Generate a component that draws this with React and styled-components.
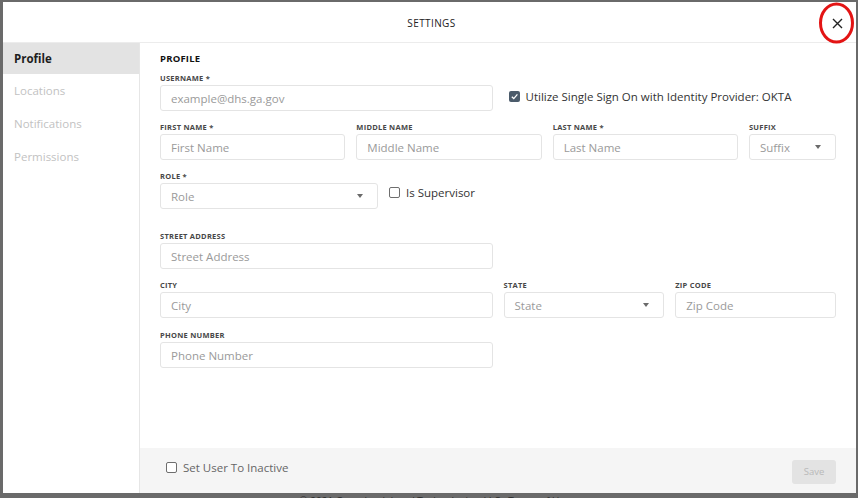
import React from 'react';
import styled, { createGlobalStyle } from 'styled-components';

const GlobalStyle = createGlobalStyle`
  html, body { margin: 0; padding: 0; background: #ffffff; }
  * { box-sizing: border-box; }
  body { font-family: 'Open Sans', 'Liberation Sans', sans-serif; }
`;

const Screen = styled.div`
  width: 864px;
  height: 498px;
  overflow: hidden;
  background: #ffffff;
`;

const Backdrop = styled.div`
  width: 858px;
  height: 498px;
  background: #6a6a6a;
  padding: 2px 2px 0 3px;
  display: flex;
  flex-direction: column;
  overflow: hidden;
`;

const Modal = styled.div`
  height: 491px;
  flex-shrink: 0;
  background: #ffffff;
  display: flex;
  flex-direction: column;
`;

const Footnote = styled.div`
  text-align: center;
  font-size: 10px;
  line-height: 12px;
  color: #2a2a2a;
  margin-top: 2px;
  padding-left: 10px;
`;

const Header = styled.div`
  position: relative;
  height: 41px;
  flex-shrink: 0;
  border-bottom: 1px solid #ececec;
  display: flex;
  align-items: center;
  justify-content: center;
`;

const Title = styled.div`
  font-size: 10px;
  letter-spacing: 0.4px;
  color: #222;
  padding-left: 4px;
  margin-top: 2px;
`;

const CloseWrap = styled.div`
  position: absolute;
  right: 0;
  top: 0;
  width: 38px;
  height: 42px;
`;

const Body = styled.div`
  flex: 1;
  display: flex;
  min-height: 0;
`;

const Sidebar = styled.nav`
  width: 137px;
  flex-shrink: 0;
  border-right: 1px solid #e6e6e6;
  display: flex;
  flex-direction: column;
`;

const NavItem = styled.div`
  height: ${p => (p.$active ? '31px' : '33px')};
  display: flex;
  align-items: center;
  padding-left: 11px;
  font-size: 11.5px;
  font-weight: ${p => (p.$active ? 700 : 400)};
  color: ${p => (p.$active ? '#1e1e1e' : '#c2c2c2')};
  background: ${p => (p.$active ? '#e3e3e3' : 'transparent')};
`;

const Main = styled.div`
  flex: 1;
  display: flex;
  flex-direction: column;
`;

const Form = styled.div`
  flex: 1;
  padding: 9px 20px 0 20px;
  display: flex;
  flex-direction: column;
`;

const SectionTitle = styled.div`
  font-size: 9.5px;
  font-weight: 700;
  color: #111;
  letter-spacing: 0.2px;
  margin-bottom: 9px;
`;

const Row = styled.div`
  display: grid;
  grid-template-columns: ${p => p.$cols};
  column-gap: 11px;
  align-items: start;
  margin-top: ${p => p.$gap || '12px'};
`;

const Field = styled.div`
  display: flex;
  flex-direction: column;
  min-width: 0;
  grid-column: span ${p => p.$span || 1};
`;

const Label = styled.div`
  font-size: 7.5px;
  font-weight: 700;
  color: #474747;
  letter-spacing: 0.25px;
  height: 8px;
  line-height: 8px;
  margin-bottom: 3px;
  text-transform: uppercase;
`;

const Input = styled.div`
  height: 26px;
  border: 1px solid #e4e4e4;
  border-radius: 3px;
  display: flex;
  align-items: center;
  justify-content: space-between;
  padding: 0 14px 0 10px;
  font-size: 11.5px;
  color: #9a9a9a;
  background: #fff;
`;

const Caret = styled.span`
  width: 0;
  height: 0;
  border-left: 3.5px solid transparent;
  border-right: 3.5px solid transparent;
  border-top: 4px solid #6a6a6a;
`;

const CheckRow = styled.label`
  display: flex;
  align-items: center;
  gap: 6px;
  font-size: 11.5px;
  white-space: nowrap;
  color: ${p => (p.$muted ? '#666' : '#333')};
  margin-top: ${p => p.$top || '0'};
  margin-bottom: ${p => p.$bottom || '0'};
  padding-left: ${p => p.$indent || '0'};
`;

const Box = styled.span`
  width: 11px;
  height: 11px;
  border-radius: 2px;
  flex-shrink: 0;
  display: flex;
  align-items: center;
  justify-content: center;
  background: ${p => (p.$checked ? '#4b5b6b' : '#fff')};
  border: ${p => (p.$checked ? 'none' : '1.3px solid #6e6e6e')};
`;

const Footer = styled.div`
  height: 45px;
  flex-shrink: 0;
  background: #f5f5f5;
  display: flex;
  align-items: center;
  justify-content: space-between;
  padding: 0 20px 0 26px;
`;

const SaveButton = styled.button`
  width: 44px;
  height: 24px;
  border: none;
  border-radius: 3px;
  background: #e3e3e3;
  color: #b9b9b9;
  font-family: inherit;
  font-size: 9.5px;
  margin-top: 2px;
`;

function Checkbox({ checked }) {
  return (
    <Box $checked={checked}>
      {checked && (
        <svg width="9" height="9" viewBox="0 0 10 10">
          <path d="M2 5.2 L4.2 7.3 L8.2 2.6" fill="none" stroke="#fff" strokeWidth="1.4" />
        </svg>
      )}
    </Box>
  );
}

function TextBox({ label, placeholder, span, select }) {
  return (
    <Field $span={span}>
      <Label>{label}</Label>
      <Input>
        <span>{placeholder}</span>
        {select && <Caret />}
      </Input>
    </Field>
  );
}

const FOUR = 'repeat(4, minmax(0, 1fr))';

export default function App() {
  return (
    <Screen>
      <GlobalStyle />
      <Backdrop>
        <Modal>
          <Header>
            <Title>SETTINGS</Title>
            <CloseWrap>
              <svg width="38" height="42" viewBox="0 0 38 42">
                <path d="M15 17 L24 26 M24 17 L15 26" stroke="#222" strokeWidth="1.4" fill="none" />
                <ellipse cx="18.5" cy="21" rx="16" ry="19" stroke="#e31414" strokeWidth="3" fill="none" />
              </svg>
            </CloseWrap>
          </Header>
          <Body>
            <Sidebar>
              <NavItem $active>Profile</NavItem>
              <NavItem>Locations</NavItem>
              <NavItem>Notifications</NavItem>
              <NavItem>Permissions</NavItem>
            </Sidebar>
            <Main>
              <Form>
                <SectionTitle>PROFILE</SectionTitle>
                <Row $cols={FOUR} $gap="0">
                  <TextBox label="Username *" placeholder="example@dhs.ga.gov" span={2} />
                  <CheckRow $top="15px" $indent="5px">
                    <Checkbox checked />
                    <span>Utilize Single Sign On with Identity Provider: OKTA</span>
                  </CheckRow>
                </Row>
                <Row $cols="repeat(3, minmax(0, 1fr)) 87px">
                  <TextBox label="First Name *" placeholder="First Name" />
                  <TextBox label="Middle Name" placeholder="Middle Name" />
                  <TextBox label="Last Name *" placeholder="Last Name" />
                  <TextBox label="Suffix" placeholder="Suffix" select />
                </Row>
                <Row $cols="repeat(3, minmax(0, 1fr))">
                  <TextBox label="Role *" placeholder="Role" select />
                  <CheckRow $top="13px">
                    <Checkbox />
                    <span>Is Supervisor</span>
                  </CheckRow>
                </Row>
                <Row $cols={FOUR} $gap="23px">
                  <TextBox label="Street Address" placeholder="Street Address" span={2} />
                </Row>
                <Row $cols={FOUR}>
                  <TextBox label="City" placeholder="City" span={2} />
                  <TextBox label="State" placeholder="State" select />
                  <TextBox label="Zip Code" placeholder="Zip Code" />
                </Row>
                <Row $cols={FOUR} $gap="13px">
                  <TextBox label="Phone Number" placeholder="Phone Number" span={2} />
                </Row>
              </Form>
              <Footer>
                <CheckRow $muted $bottom="6px">
                  <Checkbox />
                  <span>Set User To Inactive</span>
                </CheckRow>
                <SaveButton>Save</SaveButton>
              </Footer>
            </Main>
          </Body>
        </Modal>
        <Footnote>© 2021 Greenbook Legal Technologies, LLC · Terms of Use</Footnote>
      </Backdrop>
    </Screen>
  );
}
